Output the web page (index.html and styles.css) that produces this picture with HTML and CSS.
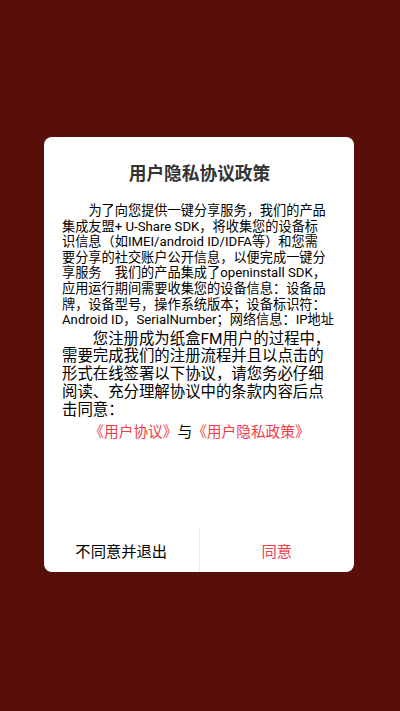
FILE: index.html
```html
<!DOCTYPE html>
<html lang="zh-CN">
<head>
<meta charset="utf-8">
<title>用户隐私协议政策</title>
<link rel="stylesheet" href="styles.css">
</head>
<body>
<div class="dialog">
  <div class="content">
    <h1 class="title">用户隐私协议政策</h1>
    <p class="intro">为了向您提供一键分享服务，我们的产品<br>集成友盟+ U-Share SDK，将收集您的设备标<br>识信息（如IMEI/android ID/IDFA等）和您需<br>要分享的社交账户公开信息，以便完成一键分<br>享服务&#12288;我们的产品集成了openinstall SDK，<br>应用运行期间需要收集您的设备信息：设备品<br>牌，设备型号，操作系统版本；设备标识符：<br>Android ID，SerialNumber；网络信息：IP地址</p>
    <p class="notice">您注册成为纸盒FM用户的过程中，需要完成我们的注册流程并且以点击的形式在线签署以下协议，请您务必仔细阅读、充分理解协议中的条款内容后点击同意：</p>
    <p class="links"><a class="link" href="#">《用户协议》</a>与<a class="link" href="#">《用户隐私政策》</a></p>
  </div>
  <div class="actions">
    <button class="btn btn-cancel">不同意并退出</button>
    <button class="btn btn-ok">同意</button>
  </div>
</div>
</body>
</html>
```
FILE: styles.css
```css
html, body {
  margin: 0;
  padding: 0;
}
body {
  width: 400px;
  height: 711px;
  background: #580f0a;
  font-family: Roboto, "Noto Sans CJK SC", sans-serif;
  overflow: hidden;
}
.dialog {
  margin: 137px 0 0 44px;
  width: 310px;
  height: 435px;
  background: #ffffff;
  border-radius: 8px;
  display: flex;
  flex-direction: column;
}
.content {
  flex: 1;
  padding: 25px 17px 0 18px;
}
.title {
  margin: 0 0 17px 0;
  font-size: 17.7px;
  line-height: 24px;
  font-weight: bold;
  color: #333333;
  text-align: center;
}
.intro {
  margin: 0;
  font-size: 13.2px;
  line-height: 15.6px;
  text-indent: 2em;
  color: #000000;
}
.notice {
  margin: 3px 0 0 0;
  font-size: 15.4px;
  line-height: 17.7px;
  text-indent: 2em;
  color: #000000;
}
.links {
  margin: 4px 0 0 0;
  font-size: 14.7px;
  line-height: 18px;
  text-align: center;
  color: #000000;
}
.link {
  color: #f03c4a;
  text-decoration: none;
}
.actions {
  display: flex;
  height: 44px;
}
.btn {
  flex: 1;
  border: none;
  background: transparent;
  font-family: Roboto, "Noto Sans CJK SC", sans-serif;
  font-size: 15.3px;
  font-weight: 400;
  padding: 0;
  margin: 0;
  cursor: pointer;
}
.btn-cancel {
  color: #000000;
  border-right: 1px solid #ececec;
}
.btn-ok {
  color: #f03c4a;
}
```
